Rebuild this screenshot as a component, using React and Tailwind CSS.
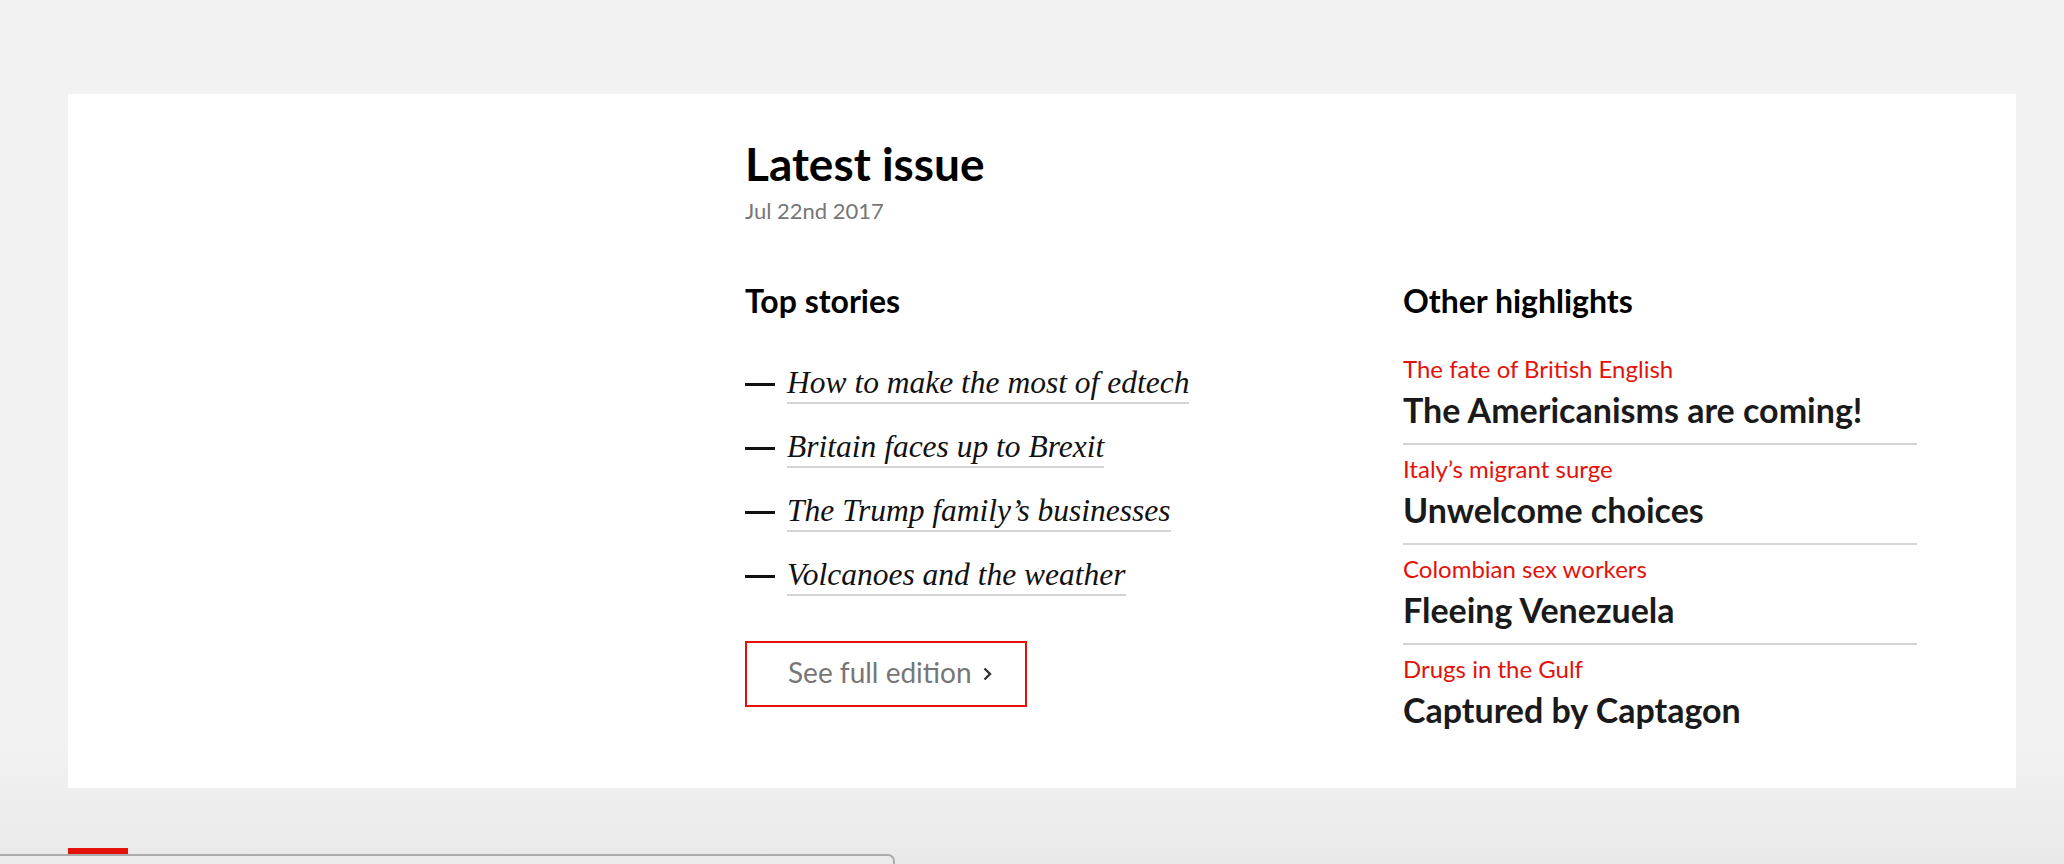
import React from 'react';

const topStories = [
  'How to make the most of edtech',
  'Britain faces up to Brexit',
  'The Trump family\u2019s businesses',
  'Volcanoes and the weather',
];

const highlights = [
  { kicker: 'The fate of British English', title: 'The Americanisms are coming!' },
  { kicker: 'Italy\u2019s migrant surge', title: 'Unwelcome choices' },
  { kicker: 'Colombian sex workers', title: 'Fleeing Venezuela' },
  { kicker: 'Drugs in the Gulf', title: 'Captured by Captagon' },
];

const sans = "font-['Lato','Noto_Sans',sans-serif]";
const serif = "font-['Liberation_Serif','DejaVu_Serif',serif]";

function TopStories() {
  return (
    <div className="w-[658px] shrink-0">
      <h3 className={`${sans} text-[32px] leading-[38px] font-bold text-black`}>Top stories</h3>
      <ul className="mt-[44px] flex flex-col gap-[24px]">
        {topStories.map((s) => (
          <li key={s} className="flex items-center h-[40px]">
            <span className="w-[30px] h-[3px] bg-[#121212] mr-[12px] shrink-0" />
            <a className={`${serif} italic text-[31.5px] leading-[38px] text-[#121212] border-b-2 border-[#d4d4d4]`}>
              {s}
            </a>
          </li>
        ))}
      </ul>
      {/* button */}
      <a className="mt-[45px] flex items-center w-[282px] h-[66px] border-2 border-[#e3120b] pl-[41px] pb-[4px]">
        <span className={`${sans} text-[28px] leading-[34px] text-[#767676]`}>See full edition</span>
        <svg width="9" height="14" viewBox="0 0 9 14" className="ml-[11px] mt-[3px]">
          <polyline points="1.5,1.5 7,7 1.5,12.5" fill="none" stroke="#333" strokeWidth="2.4" />
        </svg>
      </a>
    </div>
  );
}

function Highlights() {
  return (
    <div className="w-[514px] shrink-0">
      <h3 className={`${sans} text-[32px] leading-[38px] font-bold text-black`}>Other highlights</h3>
      <div className="mt-[25px]">
        {highlights.map((h, i) => (
          <div
            key={h.title}
            className={`pt-[9px] ${i < highlights.length - 1 ? 'pb-[13px] border-b-2 border-[#d4d4d4]' : ''}`}
          >
            <div className={`${sans} text-[24px] leading-[30px] text-[#e3120b]`}>{h.kicker}</div>
            <div className={`${sans} mt-[6px] text-[34px] leading-[40px] font-bold text-[#1a1a1a]`}>
              {h.title}
            </div>
          </div>
        ))}
      </div>
    </div>
  );
}

export default function App() {
  return (
    <div className="relative h-[864px] overflow-hidden bg-[linear-gradient(to_bottom,#f2f2f2_86%,#e9e9e9)] pt-[94px]">
      <div className="ml-[68px] w-[1948px] h-[694px] bg-white flex">
        {/* cover image area (not loaded) */}
        <div className="w-[677px] shrink-0" />
        <div className="pt-[42px]">
          <h2 className={`${sans} text-[46px] leading-[55px] font-bold text-black`}>Latest issue</h2>
          <div className={`${sans} mt-[6px] text-[22px] leading-[28px] text-[#767676]`}>Jul 22nd 2017</div>
          <div className="mt-[57px] flex">
            <TopStories />
            <Highlights />
          </div>
        </div>
      </div>

      {/* bottom sticky bar */}
      <div className="absolute left-0 bottom-0 w-[895px] h-[10px] border-t-2 border-r-2 border-[#ababab] rounded-tr-[7px] bg-[#ebebeb]">
        <div className="absolute left-[68px] top-[-8px] w-[60px] h-[6px] bg-[#e3120b]" />
      </div>
    </div>
  );
}
